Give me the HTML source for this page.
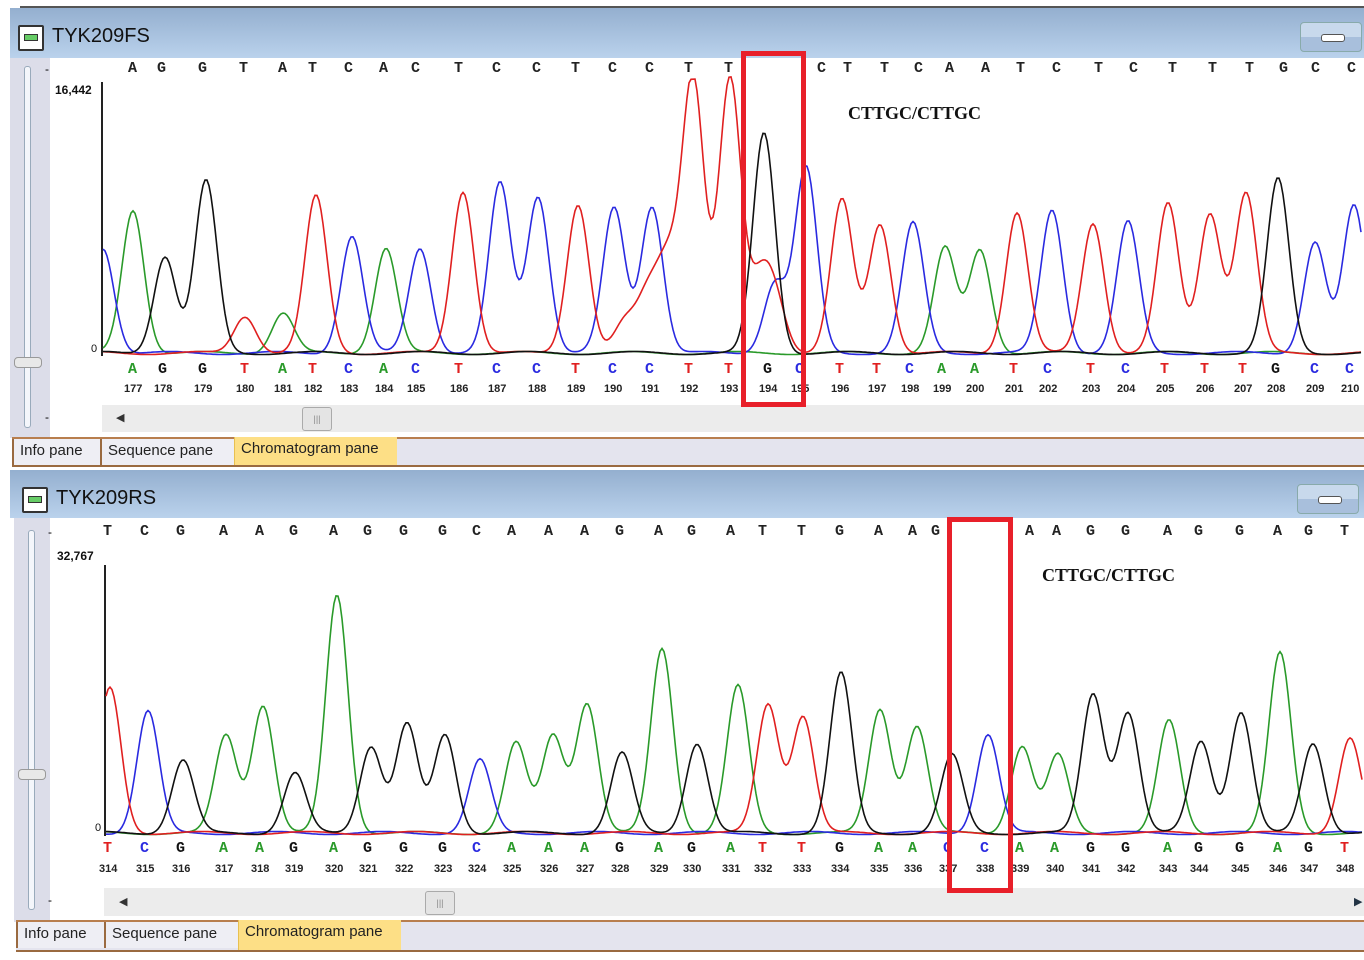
<!DOCTYPE html>
<html><head><meta charset="utf-8"><style>
body{margin:0;width:1364px;height:960px;background:#fff;position:relative;overflow:hidden;font-family:"Liberation Sans",sans-serif}
.a{position:absolute}
.title{background:linear-gradient(#94afcf,#bad2ec);}
.tt{font-size:20px;color:#111}
.icon{width:22px;height:22px;border:2px solid #333;border-radius:2px;background:#fff}
.icon:after{content:"";position:absolute;left:4px;top:7px;width:12px;height:5px;background:#6c6;border:1px solid #333}
.minb{width:60px;height:28px;border:1px solid #8aa;border-radius:4px;background:linear-gradient(#c8d9ec 50%,#a8bfdc 50%)}
.minb:after{content:"";position:absolute;left:20px;top:11px;width:22px;height:6px;background:#fff;border:1px solid #555;border-radius:3px}
.side{background:#dcdde9}
.track{width:5px;border:1px solid #9ab;background:#f4f6fb;border-radius:3px}
.thumb{width:26px;height:9px;border:1px solid #999;background:#e8e8e8;border-radius:4px}
.sb{background:#ececec}
.sth{width:28px;height:22px;border:1px solid #aaa;border-radius:3px;background:#e4e4e4;font-size:9px;color:#888;text-align:center;line-height:22px}
.tabs{border-top:2px solid #b87e4e;border-bottom:2px solid #9a6a40;background:#e4e4ee}
.tab{top:0;height:26px;font-size:15px;color:#222;line-height:24px;padding-left:6px;border-left:2px solid #9a6a40;background:#eeeef4}
.b{font-family:"Liberation Mono",monospace;font-weight:bold;font-size:15px;color:#222}
.n{font-size:11px;font-weight:bold;color:#222}
.red{border:5px solid #e8202a}
.ct{font-family:"Liberation Serif",serif;font-weight:bold;font-size:18px;color:#111}
.yl{font-size:12px;font-weight:bold;color:#111}
</style></head><body>
<div class="a" style="left:20px;top:6px;width:1344px;height:2px;background:#555"></div>
<div class="a title" style="left:10px;top:8px;width:1354px;height:50px"></div>
<div class="a icon" style="left:18px;top:25px"></div>
<div class="a tt" style="left:52px;top:25px">TYK209FS</div>
<div class="a minb" style="left:1300px;top:22px"></div>
<div class="a side" style="left:10px;top:58px;width:40px;height:380px"></div>
<div class="a track" style="left:24px;top:66px;height:360px"></div>
<div class="a thumb" style="left:14px;top:357px"></div>
<div class="a" style="left:45px;top:62px;font-size:12px">-</div>
<div class="a" style="left:45px;top:410px;font-size:12px">-</div>
<div class="a yl" style="left:55px;top:83px">16,442</div>
<div class="a yl" style="left:91px;top:343px;font-weight:normal;font-size:11px">0</div>
<div class="a" style="left:101px;top:82px;width:2px;height:274px;background:#222"></div>
<div class="a sb" style="left:102px;top:405px;width:1262px;height:27px"></div>
<div class="a" style="left:116px;top:411px;font-size:11px;color:#333">◀</div>
<div class="a sth" style="left:302px;top:407px">|||</div>
<div class="a tabs" style="left:12px;top:437px;width:1352px;height:26px">
<div class="a tab" style="left:0;width:82px">Info pane</div>
<div class="a tab" style="left:88px;width:126px">Sequence pane</div>
<div class="a tab" style="left:222px;width:156px;background:#fddf86;border-left:1px solid #e8c050;top:-2px;height:28px">Chromatogram pane</div>
</div>
<div class="a title" style="left:10px;top:470px;width:1354px;height:48px"></div>
<div class="a icon" style="left:22px;top:487px"></div>
<div class="a tt" style="left:56px;top:487px">TYK209RS</div>
<div class="a minb" style="left:1297px;top:484px"></div>
<div class="a side" style="left:14px;top:518px;width:36px;height:404px"></div>
<div class="a track" style="left:28px;top:530px;height:378px"></div>
<div class="a thumb" style="left:18px;top:769px"></div>
<div class="a" style="left:48px;top:525px;font-size:12px">-</div>
<div class="a" style="left:48px;top:893px;font-size:12px">-</div>
<div class="a yl" style="left:57px;top:549px">32,767</div>
<div class="a yl" style="left:95px;top:822px;font-weight:normal;font-size:11px">0</div>
<div class="a" style="left:104px;top:565px;width:2px;height:271px;background:#222"></div>
<div class="a sb" style="left:104px;top:888px;width:1260px;height:28px"></div>
<div class="a" style="left:119px;top:895px;font-size:11px;color:#333">◀</div>
<div class="a" style="left:1354px;top:895px;font-size:11px;color:#234">▶</div>
<div class="a sth" style="left:425px;top:891px">|||</div>
<div class="a tabs" style="left:16px;top:920px;width:1348px;height:28px">
<div class="a tab" style="left:0;width:82px">Info pane</div>
<div class="a tab" style="left:88px;width:126px">Sequence pane</div>
<div class="a tab" style="left:222px;width:156px;background:#fddf86;border-left:1px solid #e8c050;top:-2px;height:30px">Chromatogram pane</div>
</div>
<svg class="a" style="left:0;top:0" width="1364" height="960" id="sv"></svg>
<div id="txt">
<div class="a ct" style="left:848px;top:103px">CTTGC/CTTGC</div>
<div class="a ct" style="left:1042px;top:565px">CTTGC/CTTGC</div>
</div>
<div class="a red" style="left:741px;top:51px;width:55px;height:346px"></div>
<div class="a red" style="left:947px;top:517px;width:56px;height:366px"></div>
<script>
var C={A:'#2a9a2a',G:'#111',T:'#e02020',C:'#2a2ae0'};
var t=document.getElementById('txt'),h='';
function row(xs,bases,y,col){for(var i=0;i<xs.length;i++){h+='<div class="a b" style="left:'+(xs[i]-5)+'px;top:'+y+'px;color:'+(col?C[bases[i]]:'#222')+'">'+bases[i]+'</div>';}}
function nums(xs,s,y){for(var i=0;i<xs.length;i++){h+='<div class="a n" style="left:'+(xs[i]-9)+'px;top:'+y+'px">'+(s+i)+'</div>';}}
var t1x=[133,162,203,244,283,313,349,384,416,459,497,537,576,613,650,689,729,822,848,885,919,950,986,1021,1057,1099,1134,1173,1213,1250,1284,1316,1352];
row(t1x,'AGGTATCACTCCTCCTTCTTCAATCTCTTTGCC'.split(''),60,false);
var b1x=[133,163,203,245,283,313,349,384,416,459,497,537,576,613,650,689,729,768,800,840,877,910,942,975,1014,1048,1091,1126,1165,1205,1243,1276,1315,1350];
row(b1x,'AGGTATCACTCCTCCTTGCTTCAATCTCTTTGCC'.split(''),361,true);nums(b1x,177,383);
var t2x=[108,145,181,224,260,294,334,368,404,443,477,512,549,585,620,659,692,731,763,802,840,879,913,936,1030,1057,1091,1126,1168,1199,1240,1278,1309,1345];
row(t2x,'TCGAAGAGGGCAAAGAGATTGAAGAAGGAGGAGT'.split(''),523,false);
var b2x=[108,145,181,224,260,294,334,368,404,443,477,512,549,585,620,659,692,731,763,802,840,879,913,948,985,1020,1055,1091,1126,1168,1199,1240,1278,1309,1345];
row(b2x,'TCGAAGAGGGCAAAGAGATTGAACCAAGGAGGAGT'.split(''),840,true);nums(b2x,314,863);
t.innerHTML+=h;
var p1=[[103,250,'C'],[133,212,'A'],[165,258,'G'],[206,183,'G'],[245,318,'T'],[283,315,'A'],[316,198,'T'],[352,238,'C'],[386,250,'A'],[420,250,'C'],[463,193,'T'],[500,185,'C'],[538,198,'C'],[578,206,'T'],[614,210,'C'],[652,208,'C'],[693,80,'T'],[730,82,'T'],[625,325,'T'],[648,300,'T'],[668,270,'T'],[760,290,'T'],[775,305,'T'],[764,135,'G'],[775,285,'C'],[806,170,'C'],[842,202,'T'],[880,226,'T'],[913,225,'C'],[945,250,'A'],[980,252,'A'],[1017,214,'T'],[1052,212,'C'],[1093,225,'T'],[1128,224,'C'],[1168,206,'T'],[1210,215,'T'],[1246,195,'T'],[1278,181,'G'],[1315,244,'C'],[1354,208,'C']];
var p2=[[110,690,'T'],[148,713,'C'],[183,762,'G'],[226,737,'A'],[263,707,'A'],[295,775,'G'],[337,597,'A'],[371,748,'G'],[407,726,'G'],[445,737,'G'],[480,762,'C'],[516,745,'A'],[553,737,'A'],[587,705,'A'],[622,755,'G'],[662,650,'A'],[697,745,'G'],[738,688,'A'],[768,706,'T'],[803,718,'T'],[841,675,'G'],[880,711,'A'],[917,728,'A'],[952,757,'G'],[988,736,'C'],[1022,748,'A'],[1058,757,'A'],[1093,696,'G'],[1128,714,'G'],[1169,723,'A'],[1201,743,'G'],[1241,714,'G'],[1280,655,'A'],[1313,745,'G'],[1350,740,'T']];
var s='';
function tr(pk,x0,x1,base,sig){['A','C','T','G'].forEach(function(b){var d='';for(var x=x0;x<=x1;x+=2){var v=0;pk.forEach(function(p){if(p[2]!=b)return;var dx=x-p[0];v+=(base-p[1])*Math.exp(-dx*dx/(2*sig*sig));});v=Math.min(v,base-80);v+=2+1.5*Math.sin(x/17+b.charCodeAt(0));d+=(d?'L':'M')+x+' '+(base-v).toFixed(1);}s+='<path d="'+d+'" fill="none" stroke="'+C[b]+'" stroke-width="1.6"/>';});}
tr(p1,103,1362,355,11);tr(p2,106,1362,835,11);
document.getElementById('sv').innerHTML=s;
</script>
</body></html>
